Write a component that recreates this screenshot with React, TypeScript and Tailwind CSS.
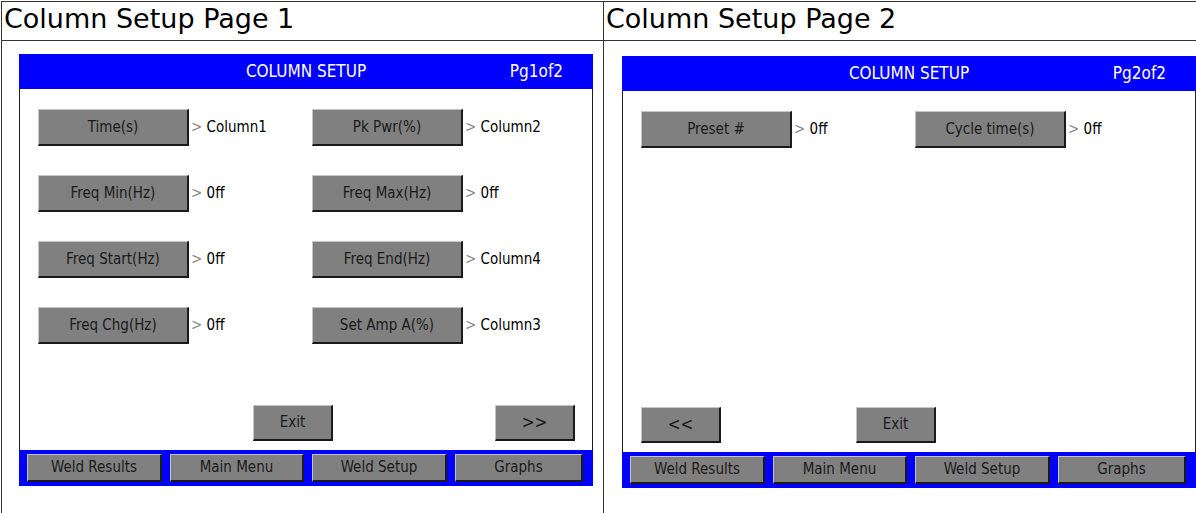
const HMI_FONT = "font-['DejaVu_Sans_Condensed','DejaVu_Sans',sans-serif]";

const RAISED =
  "bg-[#808080] border-t border-l border-t-[#c4c4c4] border-l-[#c4c4c4] border-b-2 border-r-2 border-b-[#1a1a1a] border-r-[#1a1a1a] text-[#1a1a1a] flex items-center justify-center";

type Field = { label: string; value: string };

const PAGE1: Field[] = [
  { label: "Time(s)", value: "Column1" },
  { label: "Pk Pwr(%)", value: "Column2" },
  { label: "Freq Min(Hz)", value: "0ff" },
  { label: "Freq Max(Hz)", value: "0ff" },
  { label: "Freq Start(Hz)", value: "0ff" },
  { label: "Freq End(Hz)", value: "Column4" },
  { label: "Freq Chg(Hz)", value: "0ff" },
  { label: "Set Amp A(%)", value: "Column3" },
];

const PAGE2: Field[] = [
  { label: "Preset #", value: "0ff" },
  { label: "Cycle time(s)", value: "0ff" },
];

function FieldItem({ label, value }: Field) {
  return (
    <div className="flex items-center">
      <div className={`${RAISED} w-[151px] h-[37px] text-[15px]`}>{label}</div>
      <span className="ml-[2px] text-[15px] text-black">
        <span className="text-[#8a8a8a]">&gt;</span> {value}
      </span>
    </div>
  );
}

function Footer() {
  const tabs = [
    { name: "Weld Results", w: "w-[135px]" },
    { name: "Main Menu", w: "w-[134px]" },
    { name: "Weld Setup", w: "w-[135px]" },
    { name: "Graphs", w: "w-[128px]" },
  ];
  return (
    <div className="h-[36px] bg-[#0000ff] flex items-center pl-[8px] gap-[8px] shrink-0">
      {tabs.map((t) => (
        <div key={t.name} className={`${RAISED} ${t.w} h-[28px] text-[15px]`}>
          {t.name}
        </div>
      ))}
    </div>
  );
}

function Screen({ page, fields }: { page: number; fields: Field[] }) {
  return (
    <div className={`w-[574px] h-[432px] flex flex-col ${HMI_FONT}`}>
      <div className="h-[35px] bg-[#0000ff] text-white text-[17px] relative flex items-center justify-center shrink-0">
        COLUMN SETUP
        <span className="absolute right-[30px]">Pg{page}of2</span>
      </div>
      <div className="flex-1 bg-white border-x border-[#202020] flex flex-col pl-[18px] pt-[20px]">
        <div className="grid grid-cols-[274px_274px] gap-y-[29px]">
          {fields.map((f) => (
            <FieldItem key={f.label} {...f} />
          ))}
        </div>
        <div className="flex-1" />
        <div className="flex items-end mb-[9px]">
          {page === 2 ? (
            <div className={`${RAISED} w-[80px] h-[36px] text-[17px]`}>&lt;&lt;</div>
          ) : (
            <div className="w-[80px]" />
          )}
          <div className={`${RAISED} ml-[135px] w-[80px] h-[36px] text-[15px]`}>Exit</div>
          {page === 1 && (
            <div className={`${RAISED} ml-[162px] w-[80px] h-[36px] text-[17px]`}>&gt;&gt;</div>
          )}
        </div>
      </div>
      <Footer />
    </div>
  );
}

export default function App() {
  return (
    <div className="w-[1196px] h-[513px] overflow-hidden bg-white">
      <div className="ml-[1px] mt-[1px] w-[1220px] grid grid-cols-[602px_1fr] border-l border-t border-[#333] font-['DejaVu_Sans',sans-serif]">
        <div className="h-[39px] border-r border-b border-[#333] pl-[2px] text-[27px] leading-[34px] text-black">
          Column Setup Page 1
        </div>
        <div className="h-[39px] border-b border-[#333] pl-[2px] text-[27px] leading-[34px] text-black">
          Column Setup Page 2
        </div>
        <div className="border-r border-[#333] pl-[17px] pt-[13px] pb-[60px]">
          <Screen page={1} fields={PAGE1} />
        </div>
        <div className="pl-[18px] pt-[15px] pb-[60px]">
          <Screen page={2} fields={PAGE2} />
        </div>
      </div>
    </div>
  );
}
